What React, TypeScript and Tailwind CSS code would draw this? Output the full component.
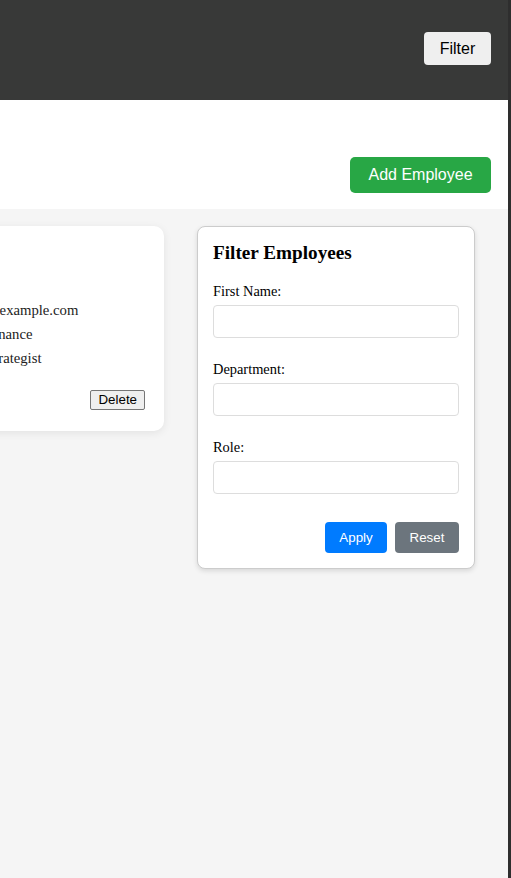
const sans = "font-['Liberation_Sans',Arial,sans-serif]";
const serif = "font-['Liberation_Serif','Times_New_Roman',serif]";

interface FieldProps {
  label: string;
  last?: boolean;
}

const Field: React.FC<FieldProps> = ({ label, last }) => (
  <div className={last ? "flex flex-col" : "flex flex-col mb-[22px]"}>
    <label className="text-[14.4px] leading-[18px] mb-[5px] text-black">{label}</label>
    <input
      type="text"
      className={`h-[33px] w-full rounded-[4px] border border-[#dddddd] bg-white px-2 text-[13.33px] outline-none ${sans}`}
    />
  </div>
);

const EmployeeCard = () => (
  <div className="w-[300px] shrink-0 rounded-[10px] bg-white px-[20px] pt-[20px] pb-[21px] shadow-[0_2px_8px_rgba(0,0,0,0.08)]">
    <h3 className="text-[18px] font-bold leading-[22px] mb-[30px]">Emily Clark</h3>
    <div className="text-[14.7px] leading-[24px] text-[#222]">
      <div className="flex">
        <span className="w-[98px] shrink-0">Email:</span>
        <span>j@example.com</span>
      </div>
      <div className="flex">
        <span className="w-[102px] shrink-0">Department:</span>
        <span>Finance</span>
      </div>
      <div className="flex">
        <span className="w-[102px] shrink-0">Role:</span>
        <span>Strategist</span>
      </div>
    </div>
    <div className="mt-[20px] flex justify-end">
      <button
        className={`-mr-[1px] h-[20px] rounded-[2px] border border-[#767676] bg-[#efefef] px-[7px] text-[13.33px] leading-[16px] text-black ${sans}`}
      >
        Delete
      </button>
    </div>
  </div>
);

const FilterPanel = () => (
  <div className="w-[278px] shrink-0 rounded-[8px] border border-[#cccccc] bg-white p-[15px] shadow-[0_2px_5px_rgba(0,0,0,0.12)]">
    <h3 className="text-[19.2px] font-bold leading-[22px] mb-[18px] text-black">Filter Employees</h3>
    <Field label="First Name:" />
    <Field label="Department:" />
    <Field label="Role:" last />
    <div className="mt-[28px] flex justify-end gap-[8px]">
      <button
        className={`h-[31px] w-[62px] rounded-[4px] bg-[#007bff] text-[13.33px] text-white ${sans}`}
      >
        Apply
      </button>
      <button
        className={`h-[31px] w-[64px] rounded-[4px] bg-[#6c757d] text-[13.33px] text-white ${sans}`}
      >
        Reset
      </button>
    </div>
  </div>
);

export default function App() {
  return (
    <div className={`flex h-screen w-full overflow-hidden ${serif}`}>
      <div className="flex min-w-0 flex-1 flex-col bg-[#f5f5f5]">
        <header className="flex h-[100px] shrink-0 items-start justify-end bg-[#383938] pt-[32px] pr-[17px]">
          <button
            className={`h-[33px] w-[67px] rounded-[4px] bg-[#efefef] text-[16px] text-black ${sans}`}
          >
            Filter
          </button>
        </header>
        <section className="flex h-[109px] shrink-0 items-end justify-end bg-white pr-[17px] pb-[16px]">
          <button
            className={`h-[36px] w-[141px] rounded-[5px] bg-[#28a745] text-[16px] text-white ${sans}`}
          >
            Add Employee
          </button>
        </section>
        <main className="flex items-start justify-end gap-[33px] pt-[17px] pr-[33px]">
          <EmployeeCard />
          <FilterPanel />
        </main>
      </div>
      <div className="w-[3px] shrink-0 bg-[#2e2e2e]" />
    </div>
  );
}
